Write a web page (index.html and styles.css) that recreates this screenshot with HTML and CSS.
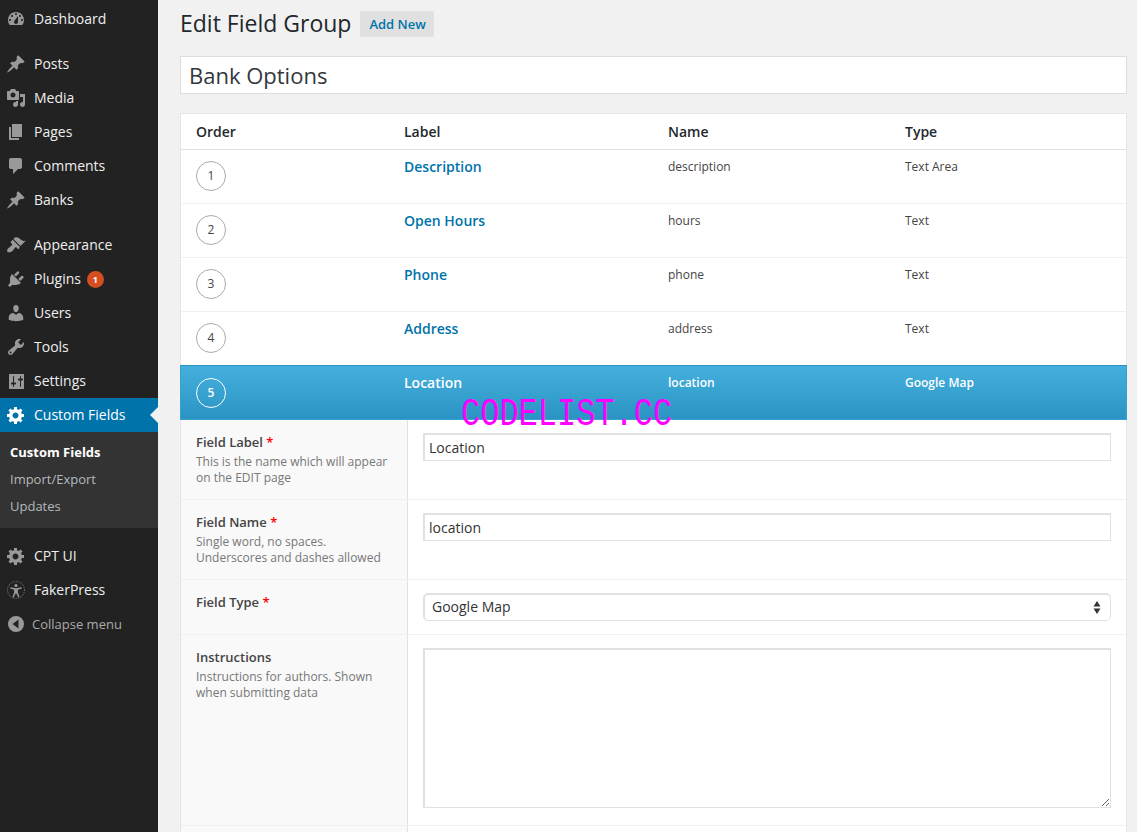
FILE: index.html
```html
<!DOCTYPE html>
<html lang="en">
<head>
    <meta charset="UTF-8">
    <title>Edit Field Group</title>
    <link rel="stylesheet" href="styles.css">
</head>
<body>
<div class="layout">
    <aside class="sidebar">
        <ul class="menu">
            <li class="menu-item"><svg class="icon" viewBox="0 0 20 20"><path fill-rule="evenodd" d="M3.76 16h12.48c1.100-1.370 1.760-3.110 1.760-5 0-4.420-3.580-8-8-8s-8 3.580-8 8c0 1.890.66 3.630 1.760 5zM10 4c.55 0 1 .45 1 1s-.45 1-1 1-1-.45-1-1 .45-1 1-1zM6 6c.55 0 1 .45 1 1s-.45 1-1 1-1-.45-1-1 .45-1 1-1zm8 0c.55 0 1 .45 1 1s-.45 1-1 1-1-.45-1-1 .45-1 1-1zm-5.370 5.550L12 7v6c0 1.100-.9 2-2 2s-2-.9-2-2c0-.57.24-1.080.63-1.450zM4 10c.55 0 1 .45 1 1s-.45 1-1 1-1-.45-1-1 .45-1 1-1zm12 0c.55 0 1 .45 1 1s-.45 1-1 1-1-.45-1-1 .45-1 1-1z"/></svg>Dashboard</li>
            <li class="menu-item menu-gap"><svg class="icon" viewBox="0 0 20 20"><use href="#pin"/></svg>Posts</li>
            <li class="menu-item"><svg class="icon" viewBox="0 0 20 20"><path fill-rule="evenodd" d="M13 11V4c0-.55-.45-1-1-1h-1.670L9 1H5L3.670 3H2c-.55 0-1 .45-1 1v7c0 .55.45 1 1 1h10c.55 0 1-.45 1-1zM7 4.500c1.380 0 2.500 1.120 2.500 2.500S8.380 9.500 7 9.500 4.500 8.380 4.500 7 5.620 4.500 7 4.500z"/><path d="M14 6h5v10.500c0 1.380-1.120 2.500-2.500 2.500S14 17.880 14 16.500s1.120-2.500 2.500-2.500c.17 0 .34.020.5.050V9h-3V6zm-4 8.050V13h2v3.500c0 1.380-1.120 2.500-2.500 2.500S7 17.880 7 16.500 8.120 14 9.500 14c.17 0 .34.020.5.050z"/></svg>Media</li>
            <li class="menu-item"><svg class="icon" viewBox="0 0 20 20"><path d="M6 15V2h10v13H6zm-1 1h8v2H3V5h2v11z"/></svg>Pages</li>
            <li class="menu-item"><svg class="icon" viewBox="0 0 20 20"><path d="M5 2h9c1.100 0 2 .9 2 2v7c0 1.100-.9 2-2 2h-2l-5 5v-5H5c-1.100 0-2-.9-2-2V4c0-1.100.9-2 2-2z"/></svg>Comments</li>
            <li class="menu-item"><svg class="icon" viewBox="0 0 20 20"><use href="#pin"/></svg>Banks</li>
            <li class="menu-item menu-gap"><svg class="icon" viewBox="0 0 20 20"><path d="M14.480 11.060L7.410 3.990l1.500-1.500c.5-.56 2.300-.47 3.510.32 1.210.8 1.430 1.280 2.910 2.100 1.180.64 2.450 1.260 4.450.85zm-.71.71L6.700 4.700 4.930 6.470c-.39.39-.39 1.020 0 1.410l1.060 1.060c.39.39.39 1.030 0 1.420-.6.6-1.430 1.110-2.210 1.690-.35.26-.7.53-1.010.84C1.430 13.230.78 15.120 1.400 17.110c1.960.6 3.890.01 5.230-1.300.31-.31.58-.66.85-1.020.57-.78 1.080-1.610 1.690-2.210.39-.39 1.020-.39 1.410 0l1.060 1.060c.39.39 1.020.39 1.410 0z"/></svg>Appearance</li>
            <li class="menu-item"><svg class="icon" viewBox="0 0 20 20"><path d="M13.110 4.360L9.870 7.600 8 5.730l3.240-3.240c.35-.34 1.050-.2 1.560.32.52.51.66 1.210.31 1.550zm-8 1.770l.91-1.120 9.010 9.010-1.190.84c-.71.71-2.630 1.160-3.820 1.160H6.140L4.900 17.260c-.59.59-1.540.59-2.120 0-.59-.58-.59-1.530 0-2.120l1.240-1.240v-3.880c0-1.130.4-3.190 1.090-3.890zm7.260 3.970l3.240-3.240c.34-.35 1.040-.21 1.550.31.52.51.66 1.210.31 1.550l-3.240 3.250z"/></svg>Plugins<span class="badge">1</span></li>
            <li class="menu-item"><svg class="icon" viewBox="0 0 20 20"><path d="M10 9.250c-2.270 0-2.730-3.440-2.730-3.440C7 4.020 7.820 2 9.970 2c2.160 0 2.980 2.020 2.710 3.810 0 0-.41 3.440-2.680 3.440zm0 2.570L12.720 10c2.390 0 4.520 2.330 4.520 4.530v2.490s-3.650 1.130-7.240 1.130c-3.650 0-7.240-1.130-7.240-1.130v-2.490c0-2.250 1.940-4.480 4.470-4.480z"/></svg>Users</li>
            <li class="menu-item"><svg class="icon" viewBox="0 0 20 20"><path fill-rule="evenodd" d="M16.680 9.770c-1.340 1.340-3.300 1.670-4.950.99l-5.410 6.520c-.99.99-2.590.99-3.580 0s-.99-2.590 0-3.570l6.520-5.420c-.68-1.650-.35-3.610.99-4.950 1.280-1.280 3.120-1.620 4.720-1.060l-2.890 2.890 2.820 2.820 2.860-2.870c.53 1.580.18 3.390-1.080 4.650zM3.810 16.210c.4.39 1.040.39 1.430 0 .4-.4.4-1.040 0-1.430-.39-.4-1.030-.4-1.430 0-.39.39-.39 1.030 0 1.430z"/></svg>Tools</li>
            <li class="menu-item"><svg class="icon" viewBox="0 0 20 20"><path fill-rule="evenodd" d="M18 18V3H3v15zM8 11.500h1c.55 0 1 .45 1 1s-.45 1-1 1H8v2c0 .28-.22.5-.5.5s-.5-.22-.5-.5v-2H6c-.55 0-1-.45-1-1s.45-1 1-1h1V5.500c0-.28.22-.5.5-.5s.5.22.5.5zm6-2h-1c-.55 0-1-.45-1-1s.45-1 1-1h1v-2c0-.28.22-.5.5-.5s.5.22.5.5v2h1c.55 0 1 .45 1 1s-.45 1-1 1h-1v6c0 .28-.22.5-.5.5s-.5-.22-.5-.5z"/></svg>Settings</li>
            <li class="menu-item menu-item-active"><svg class="icon" viewBox="0 0 20 20"><use href="#gear"/></svg>Custom Fields</li>
            <li class="submenu">
                <div class="submenu-item submenu-item-current">Custom Fields</div>
                <div class="submenu-item">Import/Export</div>
                <div class="submenu-item">Updates</div>
            </li>
            <li class="menu-item menu-gap"><svg class="icon" viewBox="0 0 20 20"><use href="#gear"/></svg>CPT UI</li>
            <li class="menu-item"><svg class="icon" viewBox="0 0 20 20"><circle cx="10" cy="10" r="8.500" fill="none" stroke="currentColor" stroke-width=".7" stroke-dasharray="1 1"/><circle cx="10" cy="5.500" r="1.600"/><path d="M4.500 7.200l5.500 1 5.500-1 .3 1.200-4 1.300.2 3 1.500 4.300-1.200.4-1.900-4h-.8l-1.900 4-1.200-.4 1.500-4.300.2-3-4-1.300z"/></svg>FakerPress</li>
            <li class="menu-item menu-collapse"><svg class="icon" viewBox="0 0 20 20"><path fill-rule="evenodd" d="M10 2a8 8 0 1 1 0 16 8 8 0 0 1 0-16zM12.500 5.500L6.500 10l6 4.500z"/></svg>Collapse menu</li>
        </ul>
    </aside>

    <main class="content">
        <div class="page-header">
            <h1>Edit Field Group</h1>
            <a class="add-new">Add New</a>
        </div>

        <input class="title-input" type="text" value="Bank Options">

        <section class="panel">
            <table class="fields">
                <thead>
                    <tr><th class="col-order">Order</th><th class="col-label">Label</th><th class="col-name">Name</th><th>Type</th></tr>
                </thead>
                <tbody>
                    <tr><td><span class="order">1</span></td><td><a class="field-link">Description</a></td><td>description</td><td>Text Area</td></tr>
                    <tr><td><span class="order">2</span></td><td><a class="field-link">Open Hours</a></td><td>hours</td><td>Text</td></tr>
                    <tr><td><span class="order">3</span></td><td><a class="field-link">Phone</a></td><td>phone</td><td>Text</td></tr>
                    <tr><td><span class="order">4</span></td><td><a class="field-link">Address</a></td><td>address</td><td>Text</td></tr>
                    <tr class="row-open"><td><span class="order">5</span></td><td><a class="field-link">Location</a></td><td>location</td><td>Google Map</td></tr>
                </tbody>
            </table>

            <div class="setting setting-label">
                <div class="setting-info">
                    <label>Field Label <span class="required">*</span></label>
                    <p>This is the name which will appear on the EDIT page</p>
                </div>
                <div class="setting-input"><input type="text" value="Location"></div>
            </div>
            <div class="setting setting-label">
                <div class="setting-info">
                    <label>Field Name <span class="required">*</span></label>
                    <p>Single word, no spaces.<br>Underscores and dashes allowed</p>
                </div>
                <div class="setting-input"><input type="text" value="location"></div>
            </div>
            <div class="setting setting-type">
                <div class="setting-info">
                    <label>Field Type <span class="required">*</span></label>
                </div>
                <div class="setting-input">
                    <div class="select-wrap">
                        <select><option>Google Map</option></select>
                        <svg class="select-arrows" viewBox="0 0 8 13"><path d="M4 0l3.500 5.500h-7zM4 13L.5 7.500h7z"/></svg>
                    </div>
                </div>
            </div>
            <div class="setting setting-instructions">
                <div class="setting-info">
                    <label>Instructions</label>
                    <p>Instructions for authors. Shown when submitting data</p>
                </div>
                <div class="setting-input"><textarea></textarea></div>
            </div>
            <div class="setting setting-label">
                <div class="setting-info"></div>
                <div class="setting-input"></div>
            </div>
        </section>
    </main>
</div>

<div class="watermark">CODELIST.CC</div>

<svg class="defs" width="0" height="0">
    <defs>
        <path id="pin" d="M10.440 3.020l1.820-1.820 6.360 6.350-1.830 1.820c-1.050-.68-2.480-.57-3.410.36l-.75.75c-.92.93-1.040 2.350-.35 3.410l-1.830 1.820-2.410-2.410-2.800 2.790c-.42.42-3.380 2.710-3.800 2.290s1.860-3.390 2.280-3.810l2.790-2.790L4.100 9.360l1.830-1.820c1.050.69 2.480.57 3.400-.36l.75-.75c.93-.92 1.050-2.350.36-3.410z"/>
        <path id="gear" fill-rule="evenodd" d="M18 12h-2.180c-.17.7-.44 1.350-.81 1.930l1.540 1.540-2.100 2.100-1.540-1.540c-.58.36-1.230.63-1.910.79V19H8v-2.180c-.68-.16-1.330-.43-1.910-.79l-1.540 1.540-2.120-2.120 1.540-1.540c-.36-.58-.63-1.230-.79-1.910H1V9.030h2.170c.16-.7.44-1.350.8-1.940L2.430 5.550l2.100-2.100 1.540 1.540c.58-.37 1.240-.64 1.930-.81V2h3v2.180c.68.16 1.330.43 1.910.79l1.540-1.540 2.120 2.120-1.540 1.540c.36.59.64 1.240.8 1.940H18V12zm-8.500 1.500c1.660 0 3-1.340 3-3s-1.340-3-3-3-3 1.340-3 3 1.340 3 3 3z"/>
    </defs>
</svg>
</body>
</html>
```

FILE: styles.css
```css
* {
    box-sizing: border-box;
}

html, body {
    margin: 0;
    padding: 0;
    height: 100%;
    overflow: hidden;
}

body {
    font-family: "Open Sans", sans-serif;
    font-size: 13px;
    color: #444;
    background-color: #f1f1f1;
    position: relative;
}

.defs {
    position: absolute;
}

.layout {
    display: flex;
    height: 832px;
    overflow: hidden;
}

/* admin menu */
.sidebar {
    width: 158px;
    flex-shrink: 0;
    background-color: #222;
    padding-top: 2px;
}

.menu {
    list-style: none;
    margin: 0;
    padding: 0;
}

.menu-item {
    position: relative;
    display: flex;
    align-items: center;
    height: 34px;
    padding: 0 0 2px 6px;
    font-size: 14px;
    color: #eee;
}

.menu-gap {
    margin-top: 11px;
}

.icon {
    width: 20px;
    height: 20px;
    margin: 2px 8px 0 0;
    flex-shrink: 0;
    fill: #999;
    color: #999;
}

.menu-item-active {
    background-color: #0073aa;
    color: #fff;
}

.menu-item-active .icon {
    fill: #fff;
}

.menu-item-active::after {
    content: "";
    position: absolute;
    right: 0;
    top: 9px;
    border: 8px solid transparent;
    border-right-color: #f1f1f1;
    border-left-width: 0;
}

.badge {
    display: inline-block;
    width: 17px;
    height: 17px;
    margin: 2px 0 0 6px;
    border-radius: 50%;
    background-color: #d54e21;
    color: #fff;
    font-size: 9px;
    font-weight: 700;
    line-height: 17px;
    text-align: center;
}

.submenu {
    background-color: #333;
    padding: 7px 0 8px;
}

.submenu-item {
    height: 27px;
    line-height: 27px;
    padding-left: 10px;
    font-size: 13px;
    color: #b4b9be;
}

.submenu-item-current {
    color: #fff;
    font-weight: 700;
}

.menu-collapse {
    padding-bottom: 0;
    font-size: 13px;
    color: #aaa;
}

.menu-collapse .icon {
    margin: 0 6px 0 0;
}

/* page content */
.content {
    flex: 1;
    min-width: 0;
    padding: 0 10px 0 22px;
}

.page-header {
    display: flex;
    align-items: center;
    height: 48px;
}

.page-header h1 {
    margin: -2px 9px 0 0;
    font-size: 23px;
    font-weight: 400;
    color: #23282d;
}

.add-new {
    padding: 0 8px 0 9px;
    height: 26px;
    line-height: 26px;
    border-radius: 2px;
    background-color: #e0e0e0;
    color: #0073aa;
    font-size: 13px;
    font-weight: 600;
}

.title-input {
    display: block;
    width: 100%;
    height: 38px;
    margin-top: 8px;
    padding: 0 8px;
    border: 1px solid #ddd;
    background-color: #fff;
    font-family: inherit;
    font-size: 22px;
    color: #32373c;
}

.panel {
    margin-top: 19px;
    border: 1px solid #e5e5e5;
    background-color: #fff;
}

.fields {
    width: 100%;
    table-layout: fixed;
    border-collapse: collapse;
}

.col-order {
    width: 208px;
}

.col-label {
    width: 264px;
}

.col-name {
    width: 237px;
}

.fields th {
    height: 35px;
    padding: 0 15px;
    border-bottom: 1px solid #e1e1e1;
    text-align: left;
    font-size: 14px;
    font-weight: 600;
    color: #23282d;
}

.fields td {
    height: 54px;
    padding: 8px 15px 0;
    border-bottom: 1px solid #f0f0f0;
    vertical-align: top;
    font-size: 12px;
    line-height: 18px;
    color: #444;
}

.fields tbody tr:nth-child(4) td {
    border-bottom-color: #2a8fc0;
}

.fields td .order {
    margin-top: 3px;
}

.order {
    display: block;
    width: 30px;
    height: 30px;
    border: 1px solid #aaa;
    border-radius: 50%;
    text-align: center;
    line-height: 28px;
    font-size: 12px;
    color: #444;
}

.field-link {
    font-size: 14px;
    font-weight: 600;
    color: #0073aa;
}

.fields .row-open td {
    height: 55px;
    background: linear-gradient(#45afdd, #2a93c3);
    border-bottom: 0;
    color: #fff;
    font-weight: 600;
}

.fields .row-open td:first-child {
    box-shadow: -1px 0 0 #389fcf;
}

.fields .row-open td:last-child {
    box-shadow: 1px 0 0 #389fcf;
}

.fields .row-open .order {
    margin-top: 4px;
    border-color: #fff;
    color: #fff;
}

.row-open .field-link {
    color: #fff;
}

.setting {
    display: grid;
    grid-template-columns: 227px 1fr;
    border-bottom: 1px solid #f0f0f0;
}

.setting-label {
    height: 80px;
}

.setting-type {
    height: 55px;
}

.setting-instructions {
    height: 191px;
}

.setting-info {
    padding: 13px 15px;
    background-color: #f9f9f9;
    border-right: 1px solid #e1e1e1;
}

.setting-info label {
    display: block;
    font-size: 13px;
    font-weight: 600;
    color: #444;
}

.setting-info p {
    margin: 3px 0 0;
    font-size: 12px;
    line-height: 16px;
    color: #777;
}

.required {
    color: #f00;
}

.setting-input {
    padding: 13px 15px;
}

.setting-input input,
.setting-input select,
.setting-input textarea {
    display: block;
    width: 100%;
    border: 2px solid #e1e1e1;
    border-width: 2px 1px 1px 2px;
    background-color: #fff;
    font-family: inherit;
    font-size: 14px;
    color: #333;
}

.setting-input input {
    height: 28px;
    padding: 0 4px;
}

.setting-input textarea {
    height: 160px;
}

.select-wrap {
    position: relative;
}

.setting-input select {
    height: 28px;
    padding: 0 6px 2px 7px;
    border-radius: 5px;
    appearance: none;
}

.select-arrows {
    position: absolute;
    right: 10px;
    top: 8px;
    width: 8px;
    height: 13px;
    fill: #333;
}

.watermark {
    position: absolute;
    left: 461px;
    top: 393px;
    font-family: "Liberation Mono", monospace;
    font-size: 39px;
    line-height: 44px;
    color: #f0f;
    transform: scaleX(.82);
    transform-origin: left center;
    pointer-events: none;
}
```
